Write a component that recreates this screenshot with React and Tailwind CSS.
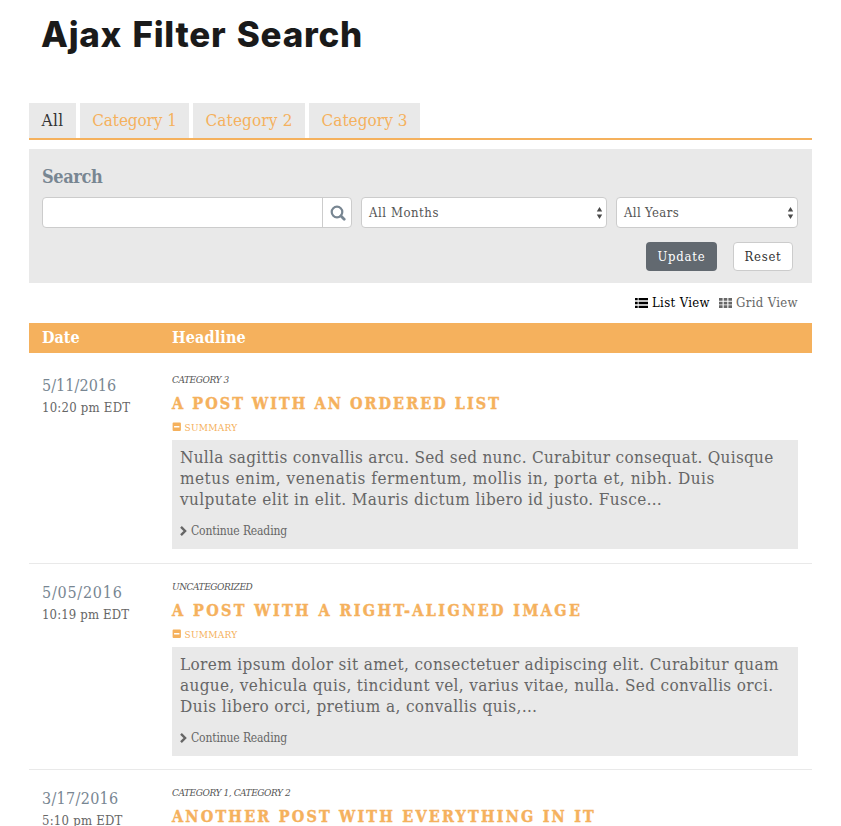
import { FaMinusSquare } from "react-icons/fa";

const TABS = [
  { label: "All", className: "w-[47px] text-[#333] tracking-[0.4px]" },
  { label: "Category 1", className: "w-[109px] text-[#f5b15d] tracking-[-0.1px]" },
  { label: "Category 2", className: "w-[112px] text-[#f5b15d] tracking-[0.15px]" },
  { label: "Category 3", className: "w-[111px] text-[#f5b15d] tracking-[0.05px]" },
];

const POSTS = [
  {
    date: "5/11/2016",
    dateClass: "tracking-[0.05px]",
    time: "10:20 pm EDT",
    timeClass: "tracking-[0.24px]",
    category: "Category 3",
    title: "A post with an ordered list",
    titleClass: "tracking-[2.05px]",
    height: "h-[207px]",
    lines: [
      { text: "Nulla sagittis convallis arcu. Sed sed nunc. Curabitur consequat. Quisque", className: "tracking-[0.28px]" },
      { text: "metus enim, venenatis fermentum, mollis in, porta et, nibh. Duis", className: "tracking-[0.53px]" },
      { text: "vulputate elit in elit. Mauris dictum libero id justo. Fusce…", className: "tracking-[0.39px]" },
    ],
  },
  {
    date: "5/05/2016",
    dateClass: "tracking-[0.75px]",
    time: "10:19 pm EDT",
    timeClass: "tracking-[0.14px]",
    category: "Uncategorized",
    title: "A post with a right-aligned image",
    titleClass: "tracking-[2.38px]",
    height: "h-[206px]",
    lines: [
      { text: "Lorem ipsum dolor sit amet, consectetuer adipiscing elit. Curabitur quam", className: "tracking-[0.36px]" },
      { text: "augue, vehicula quis, tincidunt vel, varius vitae, nulla. Sed convallis orci.", className: "tracking-[0.35px]" },
      { text: "Duis libero orci, pretium a, convallis quis,…", className: "tracking-[0.39px]" },
    ],
  },
  {
    date: "3/17/2016",
    dateClass: "tracking-[0.3px]",
    time: "5:10 pm EDT",
    timeClass: "tracking-[0.24px]",
    category: "Category 1, Category 2",
    title: "Another post with everything in it",
    titleClass: "tracking-[2.19px]",
    height: "h-[206px]",
    lines: [],
  },
];

function Select({ label, className }) {
  return (
    <div className={`flex h-[31px] items-center justify-between rounded-[4px] border border-[#ccc] bg-white pl-[7px] pr-[3px] text-[13px] text-[#555] ${className}`}>
      <span>{label}</span>
      <svg width="7" height="12" viewBox="0 0 7 12" fill="#4a4a4a">
        <path d="M3.5 0 6.2 4.5H.8zM3.5 12 .8 7.5h5.4z" />
      </svg>
    </div>
  );
}

function Post({ post }) {
  return (
    <article className={`flex shrink-0 items-start border-b border-[#e9e9e9] pl-[13px] pr-[14px] ${post.height}`}>
      <div className="w-[130px] shrink-0 pt-[18px]">
        <div className={`text-[16px] leading-[22px] text-[#788692] ${post.dateClass}`}>{post.date}</div>
        <div className={`text-[13px] leading-[22px] text-[#666] ${post.timeClass}`}>{post.time}</div>
      </div>
      <div className="w-[626px] shrink-0 pt-[15px]">
        <div className="text-[10px] italic uppercase leading-[16px] tracking-[-0.42px] text-[#555]">{post.category}</div>
        <h2 className={`mt-[4px] text-[16px] font-bold uppercase leading-[24px] text-[#f5b15d] [-webkit-text-stroke:0.4px_#f5b15d] ${post.titleClass}`}>{post.title}</h2>
        {post.lines.length > 0 && (
          <>
            <div className="mt-[3px] flex h-4 items-center gap-[3px] text-[10px] uppercase tracking-[0.27px] text-[#f5b15d]">
              <FaMinusSquare className="size-[9.5px]" />
              <span>Summary</span>
            </div>
            <div className="mt-[5px] h-[109px] bg-[#e9e9e9] px-2 pt-[7px] text-[17px] leading-[21px] text-[#666]">
              {post.lines.map((line) => (
                <div key={line.text} className={line.className}>{line.text}</div>
              ))}
              <div className="mt-[12px] flex h-[18px] items-center gap-[4px] text-[12px] tracking-[-0.15px]">
                <svg width="7" height="10" viewBox="0 0 7 10" fill="none" stroke="currentColor" strokeWidth="2.4">
                  <path d="m1 .9 4.1 4.1L1 9.1" />
                </svg>
                <span>Continue Reading</span>
              </div>
            </div>
          </>
        )}
      </div>
    </article>
  );
}

export default function App() {
  return (
    <main className="flex h-[826px] flex-col overflow-hidden bg-white pl-[29px] pr-[29px] font-['DejaVu_Serif_Condensed','DejaVu_Serif',serif] whitespace-nowrap">
      <h1 className="mt-[13px] h-[90px] shrink-0 pl-[12px] font-['Inter',sans-serif] text-[35px] font-extrabold leading-[42px] tracking-[0.72px] [word-spacing:2px] text-[#1a1a1a]">
        Ajax Filter Search
      </h1>
      <nav className="flex h-[37px] shrink-0 gap-1 border-b-2 border-[#f5b15d]">
        {TABS.map((tab) => (
          <a key={tab.label} className={`flex items-center justify-center bg-[#e9e9e9] text-[17px] ${tab.className}`}>
            {tab.label}
          </a>
        ))}
      </nav>
      <section className="mt-[9px] h-[134px] w-[783px] shrink-0 bg-[#e9e9e9] pl-[13px] pr-[14px] pt-[16px]">
        <div className="h-[32px] text-[18px] font-bold leading-[24px] tracking-[-0.4px] text-[#788692]">Search</div>
        <div className="flex">
          <div className="flex h-[31px] w-[310px] rounded-[4px] border border-[#ccc] bg-white">
            <div className="flex-1" />
            <div className="flex w-[29px] items-center justify-center border-l border-[#ccc] pl-px text-[#788692]">
              <svg width="16" height="16" viewBox="0 0 16 16" fill="none" stroke="currentColor">
                <circle cx="7" cy="7" r="5.3" strokeWidth="2.2" />
                <path d="m11 11 3.2 3.2" strokeWidth="2.8" strokeLinecap="round" />
              </svg>
            </div>
          </div>
          <Select label="All Months" className="ml-[9px] w-[246px] tracking-[0.56px]" />
          <Select label="All Years" className="ml-[9px] w-[182px] tracking-[0.37px]" />
        </div>
        <div className="mt-[14px] flex justify-end gap-4 pr-[5px] text-[13px]">
          <button className="h-[29px] w-[71px] rounded-[4px] bg-[#626970] tracking-[0.77px] text-white">Update</button>
          <button className="h-[29px] w-[60px] rounded-[4px] border border-[#ccc] bg-white tracking-[0.7px] text-[#333]">Reset</button>
        </div>
      </section>
      <div className="flex h-[40px] shrink-0 items-center justify-end pr-[14px] text-[13px] tracking-[0.36px]">
        <svg className="mr-[4px] text-black" width="13" height="10" viewBox="0 0 13 10" fill="currentColor">
          <path d="M0 0h2.7v2.3H0zM3.6 0H13v2.3H3.6zM0 3.8h2.7v2.4H0zM3.6 3.8H13v2.4H3.6zM0 7.7h2.7V10H0zM3.6 7.7H13V10H3.6z" />
        </svg>
        <span className="text-black">List View</span>
        <svg className="ml-[9px] mr-[4px]" width="13" height="10" viewBox="0 0 13 10" fill="#666">
          <path d="M0 0h3.6v2.7H0zM4.7 0h3.6v2.7H4.7zM9.4 0H13v2.7H9.4zM0 3.7h3.6v2.7H0zM4.7 3.7h3.6v2.7H4.7zM9.4 3.7H13v2.7H9.4zM0 7.3h3.6V10H0zM4.7 7.3h3.6V10H4.7zM9.4 7.3H13V10H9.4z" />
        </svg>
        <span className="text-[#666]">Grid View</span>
      </div>
      <div className="mb-1 flex h-[30px] shrink-0 items-center bg-[#f5b15d] pl-[13px] text-[16px] font-bold text-white">
        <span className="w-[130px]">Date</span>
        <span className="tracking-[0.15px]">Headline</span>
      </div>
      {POSTS.map((post) => (
        <Post key={post.date} post={post} />
      ))}
    </main>
  );
}
